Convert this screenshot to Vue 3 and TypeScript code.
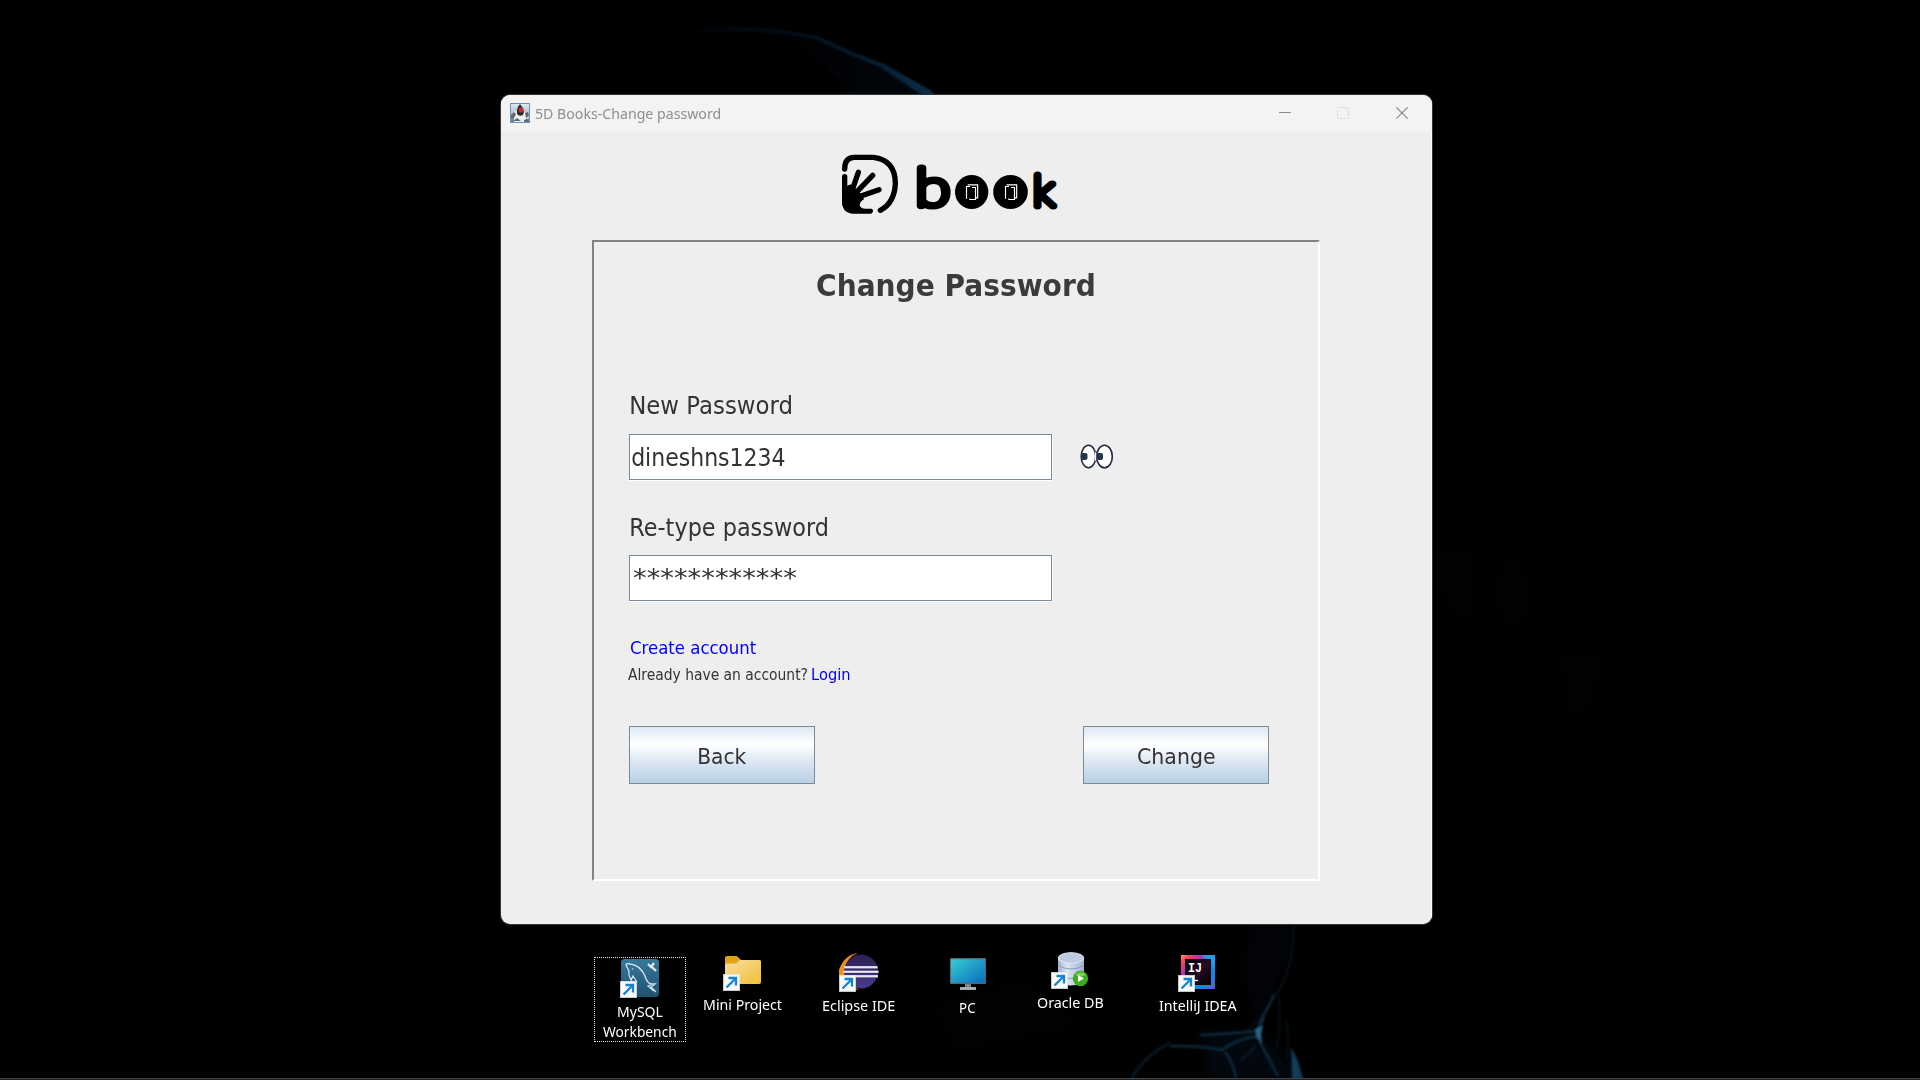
<script setup lang="ts">
import { ref } from 'vue'
import type { Directive } from 'vue'

const newPassword = ref('dineshns1234')
const masked = '*'.repeat(12)

// Stretches a label so its visible ink spans exactly the given number of pixels.
const vInk: Directive<HTMLElement, number> = {
  mounted(el, { value }) {
    const ctx = document.createElement('canvas').getContext('2d')
    const text = (el.textContent ?? '').trim()
    if (!ctx || !text) return
    const cs = getComputedStyle(el)
    ctx.font = `${cs.fontWeight} ${cs.fontSize} ${cs.fontFamily}`
    const m = ctx.measureText(text)
    const ink = m.actualBoundingBoxLeft + m.actualBoundingBoxRight
    el.style.textIndent = `${m.actualBoundingBoxLeft}px`
    el.style.width = `${value}px`
    el.style.transformOrigin = '0 50%'
    el.style.transform = `scaleX(${value / ink})`
  },
}

interface Shortcut {
  id: string
  x: number
  y: number
  labelTop: number
  lines: { text: string; width: number; left: number }[]
  link?: { x: number; y: number }
}

// x / y place the 40px glyph box on the desktop; label offsets are relative to it.
const shortcuts: Shortcut[] = [
  { id: 'mysql', x: 620, y: 958, labelTop: 43, lines: [{ text: 'MySQL', width: 45, left: -2 }, { text: 'Workbench', width: 73.5, left: -17 }], link: { x: 0, y: 23 } },
  { id: 'folder', x: 723, y: 954, labelTop: 40, lines: [{ text: 'Mini Project', width: 78.5, left: -19 }], link: { x: 0, y: 20 } },
  { id: 'eclipse', x: 839, y: 952, labelTop: 43, lines: [{ text: 'Eclipse IDE', width: 72, left: -16 }], link: { x: 0, y: 23 } },
  { id: 'pc', x: 948, y: 954, labelTop: 43, lines: [{ text: 'PC', width: 16, left: 12 }] },
  { id: 'oracle', x: 1051, y: 950, labelTop: 42, lines: [{ text: 'Oracle DB', width: 66, left: -14 }], link: { x: 0, y: 22 } },
  { id: 'idea', x: 1178, y: 952, labelTop: 43, lines: [{ text: 'IntelliJ IDEA', width: 78, left: -19.5 }], link: { x: 0, y: 23 } },
]
</script>

<template>
  <div class="desktop">
    <svg class="wallpaper" width="1920" height="1080" viewBox="0 0 1920 1080" aria-hidden="true">
      <defs>
        <linearGradient id="rim" x1="0" x2="1"><stop offset="0" stop-color="#010204" /><stop offset=".45" stop-color="#04101c" /><stop offset="1" stop-color="#0f3452" /></linearGradient>
        <linearGradient id="rim-body" x1="0" x2="1"><stop offset="0" stop-color="#000" /><stop offset="1" stop-color="#02070e" /></linearGradient>
        <filter id="soft" x="-20%" y="-20%" width="140%" height="140%" color-interpolation-filters="sRGB"><feGaussianBlur stdDeviation="1.2" /></filter>
        <filter id="softer" x="-40%" y="-40%" width="180%" height="180%" color-interpolation-filters="sRGB"><feGaussianBlur stdDeviation="5" /></filter>
      </defs>
      <path d="M790 31L817 36L850 51L884 64L930 90L936 96H850Q830 60 760 32Z" fill="url(#rim-body)" filter="url(#soft)" />
      <path d="M665 33Q740 22 790 31L817 36L850 51L884 64L930 90L936 96H923L880 67L848 54L815 39Q760 28 665 33Z" fill="url(#rim)" opacity=".85" filter="url(#soft)" />
      <g fill="#010204" filter="url(#softer)">
        <path d="M1433 552h36q8 34 4 62h-20q-4-30-20-32z" />
        <path d="M1505 556h14q14 40 7 66h-24q-8-30 3-66z" />
        <path d="M1560 652h40q2 36-20 60h-10z" />
        <path d="M935 1005l90-25 60 45-130 25z" />
      </g>
      <g filter="url(#softer)"><path d="M1250 925h42l-3 30-14 30-18 40-12-50z" fill="#02040a" /><path d="M1200 1032l60 2 30 30 10 14h-90z" fill="#02080e" /></g>
      <g fill="none" stroke="#0e2c40" filter="url(#soft)">
        <path d="M1294 925q-1 30-5 40q-6 22-15 32q-9 18-26 33" stroke-width="2" opacity=".4" />
        <path d="M1274 995q-6 12-15 30M1200 1035q40-2 56-4l8-12M1170 1046q35 0 52 4q10-8 28-13h6M1225 1052q8 10 11 26M1256 1034q10 20 22 42" stroke-width="2.5" />
        <path d="M1170 1043q-25 12-38 35M1240 1060q12-6 14-14" stroke-width="2.5" opacity=".6" />
        <path d="M1278 995q4 30-2 55M1286 1020q3 20 1 40" stroke-width="2" opacity=".35" />
      </g>
      <path d="M1255 1029l8-4-2 10 1 9-6-8z" fill="#2b6280" filter="url(#soft)" />
      <path d="M1291 1047l7 14 5 18h-11z" fill="#143b58" filter="url(#soft)" />
    </svg>

    <section class="window">
      <header class="titlebar">
        <svg class="duke" width="20" height="20" viewBox="0 0 20 20">
          <defs><linearGradient id="duke-bg" x1="0" y1="0" x2="0" y2="1"><stop offset="0" stop-color="#dfeaf3" /><stop offset=".6" stop-color="#a9bccb" /><stop offset="1" stop-color="#577792" /></linearGradient></defs>
          <rect x=".5" y=".5" width="19" height="19" fill="url(#duke-bg)" stroke="#7294b4" />
          <path d="M1 14q2-6 6-6l6 0q5 2 6 7l-3 1-1 3H4l0-4z" fill="#eceff0" />
          <path d="M10 1q3 3 4 8l-1 3q-4 2-6-1V7q1-4 3-6z" fill="#272b2e" />
          <path d="M1 12l3-3 2 2-2 4-3 1zM15 10l3-1 1 4-3 2zM3 18l4-3 4 3zM14 17l3-1 2 3h-5z" fill="#60696e" />
          <circle cx="11" cy="7" r="2.5" fill="#d52727" />
        </svg>
        <span class="caption" v-ink="185">5D Books-Change password</span>
        <svg class="controls" width="130" height="14" viewBox="0 0 130 14" fill="none">
          <path d="M0 5.5h12" stroke="#8d8d8d" />
          <rect x="58.5" y=".5" width="11" height="11" rx="1" stroke="#dfdfdf" />
          <path d="M117.3.3l11.4 11.4M128.7.3l-11.4 11.4" stroke="#868686" stroke-width="1.1" />
        </svg>
      </header>

      <main class="body">
        <svg class="logo" width="260" height="90" viewBox="0 0 780 270">
          <g fill="none" stroke="#000" stroke-width="16" stroke-linecap="round" stroke-linejoin="round">
            <path d="M74 87Q74 53 102 52H160Q226 60 226 130Q224 188 181 211" />
            <path d="M74 110V190M94 158L115 97M106 160L158 106M112 172L177 149" />
          </g>
          <path d="M66 140Q84 138 92 133L112 150L126 165L132 178Q119 185 119 197Q124 206 136 206H155Q160 208 159 214T153 221H98Q66 219 66 184Z" />
          <text class="glyph" x="0" y="0" transform="translate(286 197) scale(1.26 1)" font-size="153">b</text>
          <ellipse cx="455" cy="156" rx="50" ry="51" /><ellipse cx="571.500" cy="156" rx="52" ry="51" />
          <g v-for="dx in [0, 117]" :key="dx" fill="none" stroke="#fff" stroke-width="3.500" :transform="`translate(${dx} 0)`">
            <path d="M450 139.500H439.500V176M443 134.500H473V173.500H468M456 142.500H466.500V178.500H449.500V175.500" />
          </g>
          <text class="glyph" x="0" y="0" transform="translate(638 199) scale(1.08 1)" font-size="134">k</text>
        </svg>

        <form class="panel" @submit.prevent>
          <h1 v-ink="276.5">Change Password</h1>

          <label class="field-label first" v-ink="160">New Password</label>
          <div class="row">
            <div class="field"><span v-ink="152.5">{{ newPassword }}</span></div>
            <svg class="eyes" width="34" height="26" viewBox="0 0 34 26">
              <g fill="#fff" stroke="#20293c" stroke-width="1.6">
                <ellipse cx="8.500" cy="12.500" rx="7.300" ry="11.200" /><ellipse cx="24.500" cy="12.500" rx="7.800" ry="11.200" />
              </g>
              <path d="M15 8l3 1v7l-3 1z" fill="#eee" />
              <path d="M17 7.500v10" stroke="#20293c" stroke-width="1.4" />
              <rect x="1" y="9" width="6.500" height="7" rx="2" fill="#25364c" /><rect x="16.500" y="9" width="6.500" height="7" rx="2" fill="#25364c" />
            </svg>
          </div>

          <label class="field-label second" v-ink="196">Re-type password</label>
          <div class="field masked"><span v-ink="163">{{ masked }}</span></div>

          <a class="create" v-ink="126.5">Create account</a>
          <p class="login"><span v-ink="179.5">Already have an account?</span><a v-ink="37.5">Login</a></p>

          <div class="actions">
            <button type="button"><span v-ink="47.5">Back</span></button>
            <button type="submit"><span v-ink="77">Change</span></button>
          </div>
        </form>
      </main>
    </section>

    <div class="selection"></div>
    <div v-for="s in shortcuts" :key="s.id" class="shortcut" :style="{ left: s.x + 'px', top: s.y + 'px' }">
      <svg width="44" height="42" viewBox="0 0 44 42">
        <g v-if="s.id === 'mysql'">
          <defs><linearGradient id="my" x1="0" y1="0" x2="0" y2="1"><stop offset="0" stop-color="#37789c" /><stop offset="1" stop-color="#1f5370" /></linearGradient></defs>
          <rect x="1" y="1" width="38" height="38" rx="3.500" fill="url(#my)" />
          <path d="M12 23Q8 18 9 13L6 7Q6 5 10 6Q20 7 25 18Q27 25 31 26L35 26L31 29L36 34M31 27l-3 1 6 5M11 22l2-4 4 6" fill="none" stroke="#d6e3ea" stroke-width="1.300" />
          <circle cx="12.500" cy="11" r=".8" fill="#d6e3ea" />
          <path d="M28 6l3 3 3-4M31 8l5 5" fill="none" stroke="#e1ebf0" stroke-width="2.300" />
        </g>
        <g v-else-if="s.id === 'folder'">
          <defs><linearGradient id="fo" x1="0" y1="0" x2="1" y2="1"><stop offset="0" stop-color="#f6dda0" /><stop offset="1" stop-color="#f1c036" /></linearGradient></defs>
          <path d="M2 4q0-2 2-2h9q1 0 2 1l3 3h18q2 0 2 2v20H2z" fill="#dfa516" />
          <path d="M2 11q0-1.500 2-1.500h9l4-3.500h19q2 0 2 2v20q0 2-2 2H4q-2 0-2-2z" fill="url(#fo)" />
        </g>
        <g v-else-if="s.id === 'eclipse'">
          <defs><linearGradient id="ec" x1="0" y1="0" x2="0" y2="1"><stop offset="0" stop-color="#2b2050" /><stop offset="1" stop-color="#4a3a8c" /></linearGradient></defs>
          <path d="M19 1Q5 3 0 18Q-1 29 7 35L20 38Q5 30 6 17Q8 5 19 1Z" fill="#ef8f1d" />
          <circle cx="22" cy="19.500" r="17" fill="url(#ec)" />
          <path d="M5 15.500h33.500M4.500 20h35M5 24.500h34" stroke="#bdb8d3" stroke-width="2.200" /><path d="M5 15h33.500M4.500 19.500h35M5 24h34" stroke="#f4f3f8" stroke-width="1.300" />
        </g>
        <g v-else-if="s.id === 'pc'">
          <defs><linearGradient id="pc" x1="0" y1="0" x2="1" y2="1"><stop offset="0" stop-color="#37cdd2" /><stop offset="1" stop-color="#0a6cbd" /></linearGradient></defs>
          <path d="M17 29h6v5h-6z" fill="#7d8589" /><path d="M12 33h16v3H12z" fill="#a5adb1" />
          <rect x="2" y="4" width="36" height="26" rx="1" fill="#53676f" /><rect x="3" y="5.300" width="34" height="23.500" fill="url(#pc)" />
        </g>
        <g v-else-if="s.id === 'oracle'">
          <defs><linearGradient id="or" x1="0" x2="1"><stop offset="0" stop-color="#9db0cf" /><stop offset=".35" stop-color="#dce5f3" /><stop offset="1" stop-color="#9fb2d0" /></linearGradient></defs>
          <path d="M7 8v24q13 7 26 0V8z" fill="url(#or)" /><path d="M7 15.500q13 7 26 0M7 25q13 7 26 0" fill="none" stroke="#8297b8" stroke-width=".9" />
          <ellipse cx="20" cy="8" rx="12.700" ry="5.300" fill="#bccbe1" stroke="#e5ecf6" />
          <circle cx="29.500" cy="28.500" r="7.700" fill="#3fab1f" /><path d="M24 25a7 7 0 0 1 11 0q-5 3-11 0z" fill="#79cf4d" /><path d="M27 25l6 3.500-6 3.500z" fill="#fff" />
        </g>
        <g v-else>
          <defs>
            <linearGradient id="ij" x1="0" y1="0" x2="1" y2="1"><stop offset="0" stop-color="#ff9b45" /><stop offset=".13" stop-color="#f24365" /><stop offset=".3" stop-color="#b832ac" /><stop offset=".48" stop-color="#168be4" /><stop offset=".8" stop-color="#1384e0" /><stop offset="1" stop-color="#744bea" /></linearGradient>
            <linearGradient id="ij-in" x1="0" y1="0" x2="1" y2="1"><stop offset="0" stop-color="#000" /><stop offset=".5" stop-color="#280a26" /><stop offset="1" stop-color="#000" /></linearGradient>
          </defs>
          <rect x="3" y="3" width="34" height="34" fill="url(#ij)" /><path d="M37 3v17l-4-10-10-7z" fill="#25a8ea" opacity=".7" />
          <rect x="7" y="7" width="26" height="26" fill="url(#ij-in)" />
          <text class="ij" x="10" y="20.300" textLength="14" lengthAdjust="spacingAndGlyphs">IJ</text>
          <path d="M11 28.500h9" stroke="#fff" stroke-width="1.300" />
        </g>
        <g v-if="s.link" :transform="`translate(${s.link.x} ${s.link.y})`">
          <rect x=".25" y=".25" width="16.500" height="16.500" fill="#f8f8f8" stroke="#d5dbe0" stroke-width=".5" />
          <path d="M3.500 13.500L12 5M5.500 4H13v7.500" fill="none" stroke="#1384d3" stroke-width="2.300" />
        </g>
      </svg>
      <div class="names" :style="{ top: s.labelTop + 'px' }">
        <span v-for="l in s.lines" :key="l.text" v-ink="l.width" :style="{ marginLeft: l.left + 'px' }">{{ l.text }}</span>
      </div>
    </div>
    <div class="taskbar-edge"></div>
  </div>
</template>

<style>
body { background: #000; overflow: hidden; }
</style>

<style scoped>
.desktop { position: relative; width: 1920px; height: 1080px; overflow: hidden; background: #000; }
.wallpaper { position: absolute; inset: 0; }
.window {
  position: absolute; left: 501px; top: 95px; box-sizing: border-box; width: 931px; height: 829px;
  overflow: hidden; border-radius: 9px; background: #eee; box-shadow: 0 0 0 1px #343434;
  font-family: "DejaVu Sans", sans-serif; color: #333;
}
.titlebar { display: flex; align-items: flex-start; height: 37px; background: #f3f3f3; }
.duke { margin: 8px 0 0 9px; }
.caption { margin: 6px 0 0 5px; font: 15px/24px "Noto Sans", sans-serif; color: #8e8e8e; white-space: nowrap; }
.controls { margin: 12px 23px 0 auto; }
.body { height: 792px; box-sizing: border-box; border-right: 1px solid #fff; display: flex; flex-direction: column; align-items: flex-start; }
.logo { display: block; margin: 8px 0 0 319px; flex: none; }
.glyph { font-family: Lato, sans-serif; font-weight: 100; stroke: #000; stroke-width: 21px; stroke-linejoin: round; stroke-linecap: round; }
.panel {
  box-sizing: border-box; width: 728px; height: 641px; margin: 10px 0 0 91px; padding: 26px 49px 0 35px;
  border: 2px solid; border-color: #838383 #fff #fff #838383;
  display: flex; flex-direction: column; align-items: flex-start;
}
h1 { margin: 0; margin-left: 188px; font-size: 30px; line-height: 36px; font-weight: 700; white-space: nowrap; color: #3b3b3b; }
.field-label { margin-left: 2px; font-size: 25.5px; line-height: 32px; white-space: nowrap; }
.first { margin-top: 85px; }
.second { margin-top: 31px; }
.row { display: flex; align-items: flex-start; margin-top: 13px; }
.field {
  box-sizing: border-box; width: 423px; height: 46px; padding: 6px 2px 0; border: 1px solid #7a8a99;
  background: #fff; box-shadow: 0 1px 0 #fff, 1px 0 0 #f8f8f8; font-size: 25.5px; line-height: 32px; white-space: nowrap;
}
.field span { display: block; }
.masked { margin-top: 12px; padding: 5px 3px 0; }
.eyes { margin: 10px 0 0 28px; }
.create { margin: 35px 0 0 1px; font-size: 17px; line-height: 24px; color: #0000f5; white-space: nowrap; }
.login { display: flex; gap: 4px; margin: 3px 0 0 -1px; font-size: 16px; line-height: 24px; white-space: nowrap; }
.login a { color: #0000f5; }
.actions { display: flex; justify-content: space-between; width: 640px; margin-top: 39px; }
button {
  display: flex; justify-content: center; box-sizing: border-box; width: 186px; height: 58px; margin: 0; padding: 14px 0 0 1px;
  border: 1px solid #7a8a99; border-radius: 0; color: #333; font: inherit; font-size: 22px; line-height: 31px; white-space: nowrap; text-align: left;
  background: linear-gradient(#dde8f3 0%, #fff 30%, #fff 32%, #dde8f3 60%, #b8cfe5 100%);
}
.selection { position: absolute; left: 594px; top: 957px; box-sizing: border-box; width: 92px; height: 85px; border: 1px dotted #e8e8e8; }
.shortcut { position: absolute; width: 44px; height: 42px; font-family: "Noto Sans", sans-serif; }
.shortcut svg { display: block; overflow: visible; }
.names { position: absolute; left: 0; font-size: 15px; line-height: 20px; color: #fff; }
.names span { display: block; white-space: nowrap; }
.ij { font: 700 13px "Liberation Mono", monospace; fill: #fff; }
.taskbar-edge { position: absolute; left: 0; right: 0; bottom: 0; box-sizing: border-box; height: 2px; border-top: 1px solid #444; background: #202020; }
</style>
